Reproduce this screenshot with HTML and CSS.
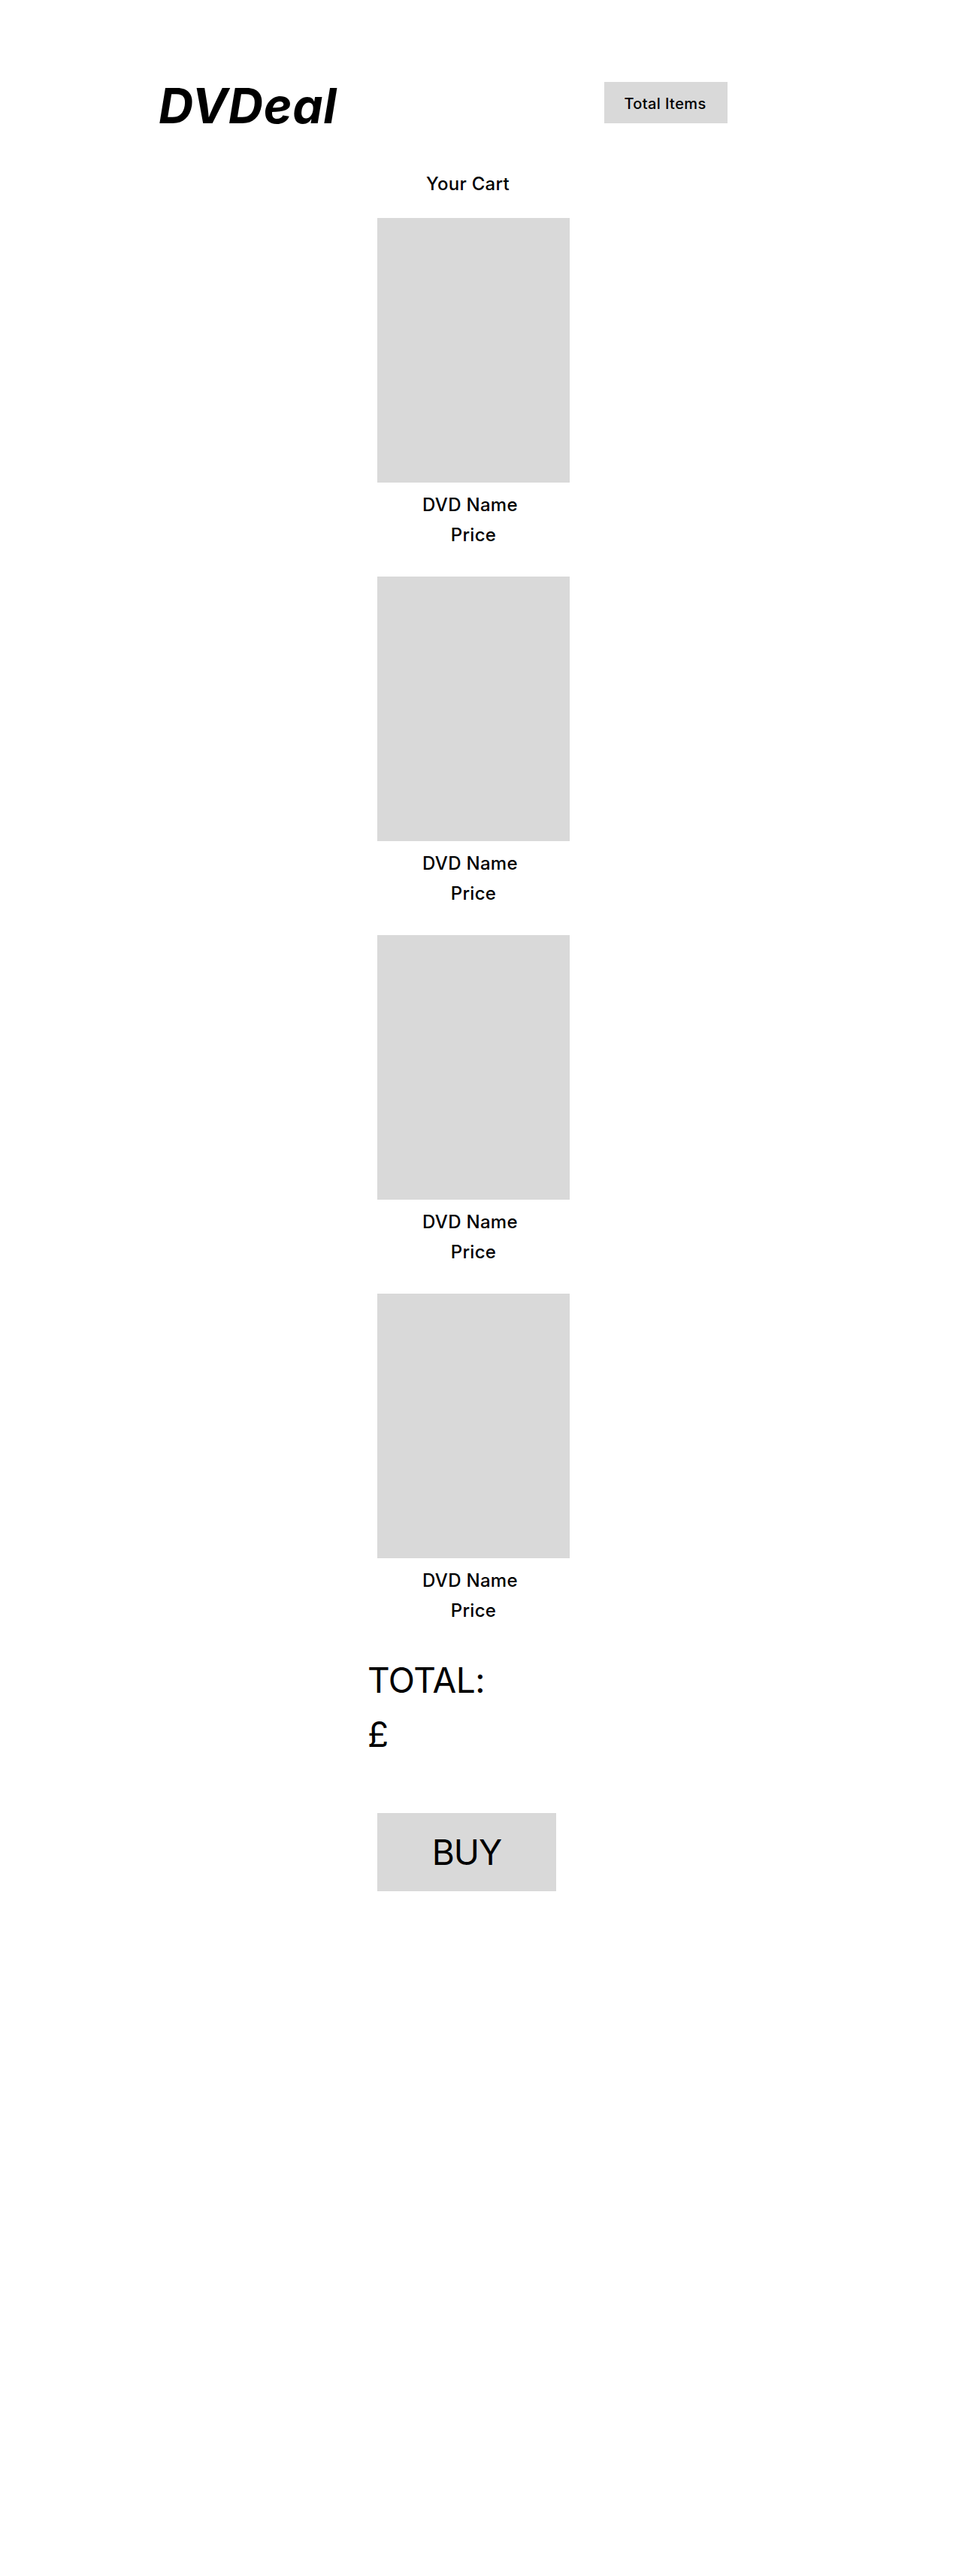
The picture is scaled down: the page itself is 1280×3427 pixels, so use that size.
FILE: index.html
```html
<!DOCTYPE html>
<html lang="en">
<head>
<meta charset="utf-8">
<title>DVDeal - Your Cart</title>
<link rel="stylesheet" href="styles.css">
</head>
<body>
<header class="site-header">
  <h1 class="logo">DVDeal</h1>
  <a class="total-items">Total Items</a>
</header>
<main class="cart">
  <h2 class="cart-title">Your Cart</h2>
  <article class="item">
    <div class="cover"></div>
    <p class="item-name">DVD Name</p>
    <p class="item-price">Price</p>
  </article>
  <article class="item">
    <div class="cover"></div>
    <p class="item-name">DVD Name</p>
    <p class="item-price">Price</p>
  </article>
  <article class="item">
    <div class="cover"></div>
    <p class="item-name">DVD Name</p>
    <p class="item-price">Price</p>
  </article>
  <article class="item">
    <div class="cover"></div>
    <p class="item-name">DVD Name</p>
    <p class="item-price">Price</p>
  </article>
  <p class="total">TOTAL:<br>£</p>
  <button class="buy">BUY</button>
</main>
</body>
</html>
```
FILE: styles.css
```css
* { box-sizing: border-box; }
html, body { margin: 0; padding: 0; }
body {
  min-height: 3427px;
  background: #fff;
  color: #000;
  font-family: Inter, "Noto Sans", sans-serif;
}
.site-header {
  display: flex;
  align-items: flex-start;
  height: 164px;
  padding: 109px 0 0 211px;
}
.logo {
  margin: 0;
  width: 593px;
  height: 55px;
  font-size: 64px;
  line-height: 64px;
  font-weight: 700;
  font-style: italic;
  letter-spacing: 0.7px;
}
.total-items {
  display: flex;
  justify-content: center;
  width: 164px;
  height: 55px;
  padding: 15px 2px 0 0;
  background: #d9d9d9;
  font-size: 20px;
  line-height: 28px;
  font-weight: 500;
  letter-spacing: 0.4px;
}
.cart {
  margin-left: 502px;
  width: 256px;
}
.cart-title {
  margin: 64px 15px 28px 0;
  text-align: center;
  font-size: 24px;
  line-height: 34px;
  font-weight: 500;
  letter-spacing: 0.3px;
}
.item { padding-bottom: 35px; }
.cover { height: 352px; background: #d9d9d9; }
.item-name, .item-price {
  margin: 0;
  text-align: center;
  font-size: 24px;
  line-height: 40px;
  font-weight: 500;
  letter-spacing: 0.3px;
}
.item-name { margin-top: 10px; padding-right: 9px; }
.total {
  margin: 1px 0 69px -13px;
  font-size: 46px;
  line-height: 72px;
  font-weight: 400;
  letter-spacing: -0.5px;
}
.buy {
  display: block;
  width: 238px;
  height: 104px;
  padding: 0;
  border: 0;
  background: #d9d9d9;
  color: #000;
  font-family: inherit;
  font-size: 46px;
  font-weight: 400;
  letter-spacing: -1px;
}
```
